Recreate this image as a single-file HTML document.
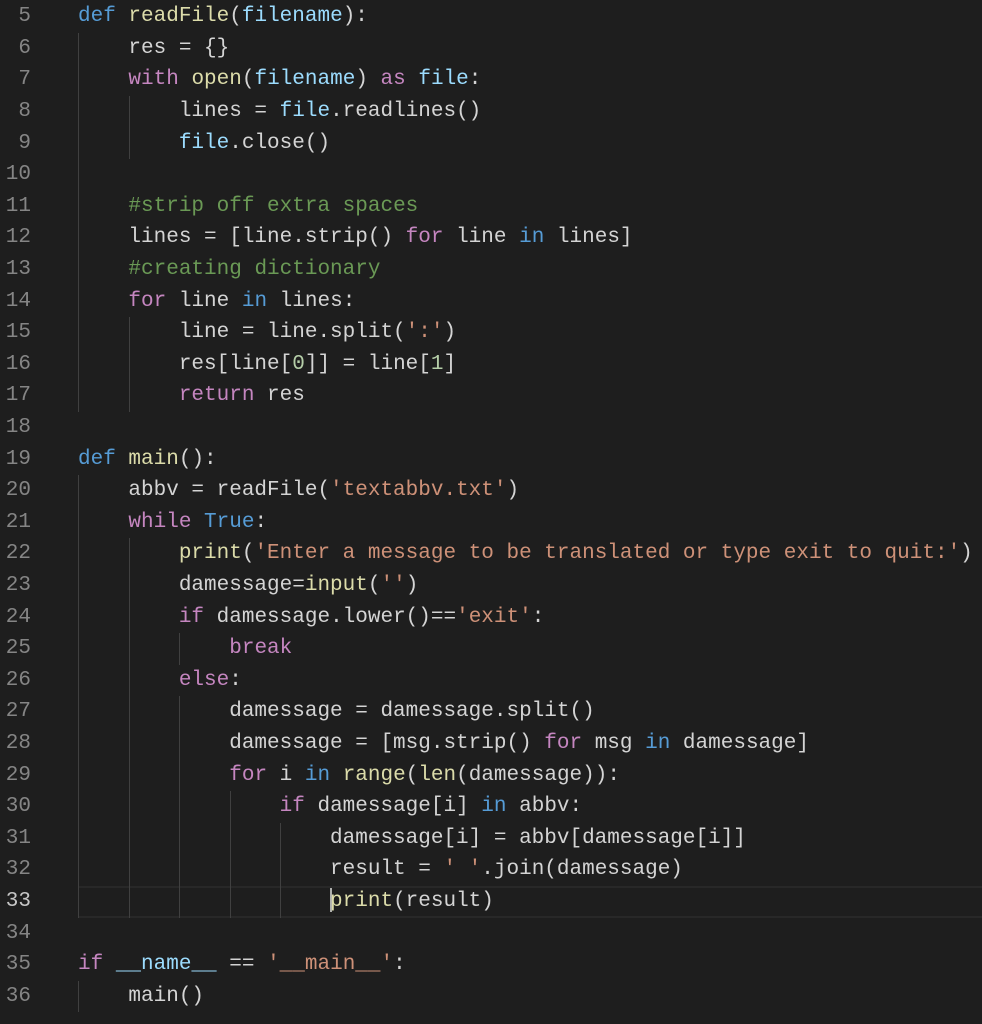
<!DOCTYPE html>
<html><head><meta charset="utf-8"><style>
html,body{margin:0;padding:0;background:#1e1e1e;width:982px;height:1024px;overflow:hidden}
#ed{position:relative;font-family:"Liberation Mono","DejaVu Sans Mono",monospace;font-size:21px;color:#d4d4d4}
.l{position:absolute;left:0;height:31.6px;line-height:31.6px;width:982px;white-space:pre}
.n{position:absolute;left:0;width:31px;text-align:right;color:#858585}
.c{position:absolute;left:78px}
.g{position:absolute;top:0;width:0;height:31.6px;border-left:1px solid #404040}
.cur{border-top:2px solid #282828;border-bottom:2px solid #282828;box-sizing:border-box}
.k{color:#c586c0}.b{color:#569cd6}.f{color:#dcdcaa}.v{color:#9cdcfe}.s{color:#ce9178}.m{color:#6a9955}.d{color:#b5cea8}
.caret{display:inline-block;width:2px;height:24px;background:#aeafad;vertical-align:middle;margin-right:-2px}
</style></head><body><div id="ed">
<script>
var L=[
[5,0,'<span class="b">def</span> <span class="f">readFile</span>(<span class="v">filename</span>):'],
[6,1,'    res = {}'],
[7,1,'    <span class="k">with</span> <span class="f">open</span>(<span class="v">filename</span>) <span class="k">as</span> <span class="v">file</span>:'],
[8,2,'        lines = <span class="v">file</span>.readlines()'],
[9,2,'        <span class="v">file</span>.close()'],
[10,1,''],
[11,1,'    <span class="m">#strip off extra spaces</span>'],
[12,1,'    lines = [line.strip() <span class="k">for</span> line <span class="b">in</span> lines]'],
[13,1,'    <span class="m">#creating dictionary</span>'],
[14,1,'    <span class="k">for</span> line <span class="b">in</span> lines:'],
[15,2,'        line = line.split(<span class="s">\':\'</span>)'],
[16,2,'        res[line[<span class="d">0</span>]] = line[<span class="d">1</span>]'],
[17,2,'        <span class="k">return</span> res'],
[18,0,''],
[19,0,'<span class="b">def</span> <span class="f">main</span>():'],
[20,1,'    abbv = readFile(<span class="s">\'textabbv.txt\'</span>)'],
[21,1,'    <span class="k">while</span> <span class="b">True</span>:'],
[22,2,'        <span class="f">print</span>(<span class="s">\'Enter a message to be translated or type exit to quit:\'</span>)'],
[23,2,'        damessage=<span class="f">input</span>(<span class="s">\'\'</span>)'],
[24,2,'        <span class="k">if</span> damessage.lower()==<span class="s">\'exit\'</span>:'],
[25,3,'            <span class="k">break</span>'],
[26,2,'        <span class="k">else</span>:'],
[27,3,'            damessage = damessage.split()'],
[28,3,'            damessage = [msg.strip() <span class="k">for</span> msg <span class="b">in</span> damessage]'],
[29,3,'            <span class="k">for</span> i <span class="b">in</span> <span class="f">range</span>(<span class="f">len</span>(damessage)):'],
[30,4,'                <span class="k">if</span> damessage[i] <span class="b">in</span> abbv:'],
[31,5,'                    damessage[i] = abbv[damessage[i]]'],
[32,5,'                    result = <span class="s">\' \'</span>.join(damessage)'],
[33,5,'                    <span class="caret"></span><span class="f">print</span>(result)'],
[34,0,''],
[35,0,'<span class="k">if</span> <span class="v">__name__</span> == <span class="s">\'__main__\'</span>:'],
[36,1,'    main()']
];
var h='';
L.forEach(function(r){
 var top=1.2+(r[0]-5)*31.6;
 h+='<div class="l" style="top:'+top+'px">';
 if(r[0]==33)h+='<div class="cur" style="position:absolute;left:78px;top:0;width:904px;height:31.6px"></div>';
 for(var k=0;k<r[1];k++)h+='<div class="g" style="left:'+(78+k*50.6)+'px"></div>';
 h+='<span class="n"'+(r[0]==33?' style="color:#c6c6c6"':'')+'>'+r[0]+'</span><span class="c">'+r[2]+'</span></div>';
});
document.write(h);
</script>
</div></body></html>
